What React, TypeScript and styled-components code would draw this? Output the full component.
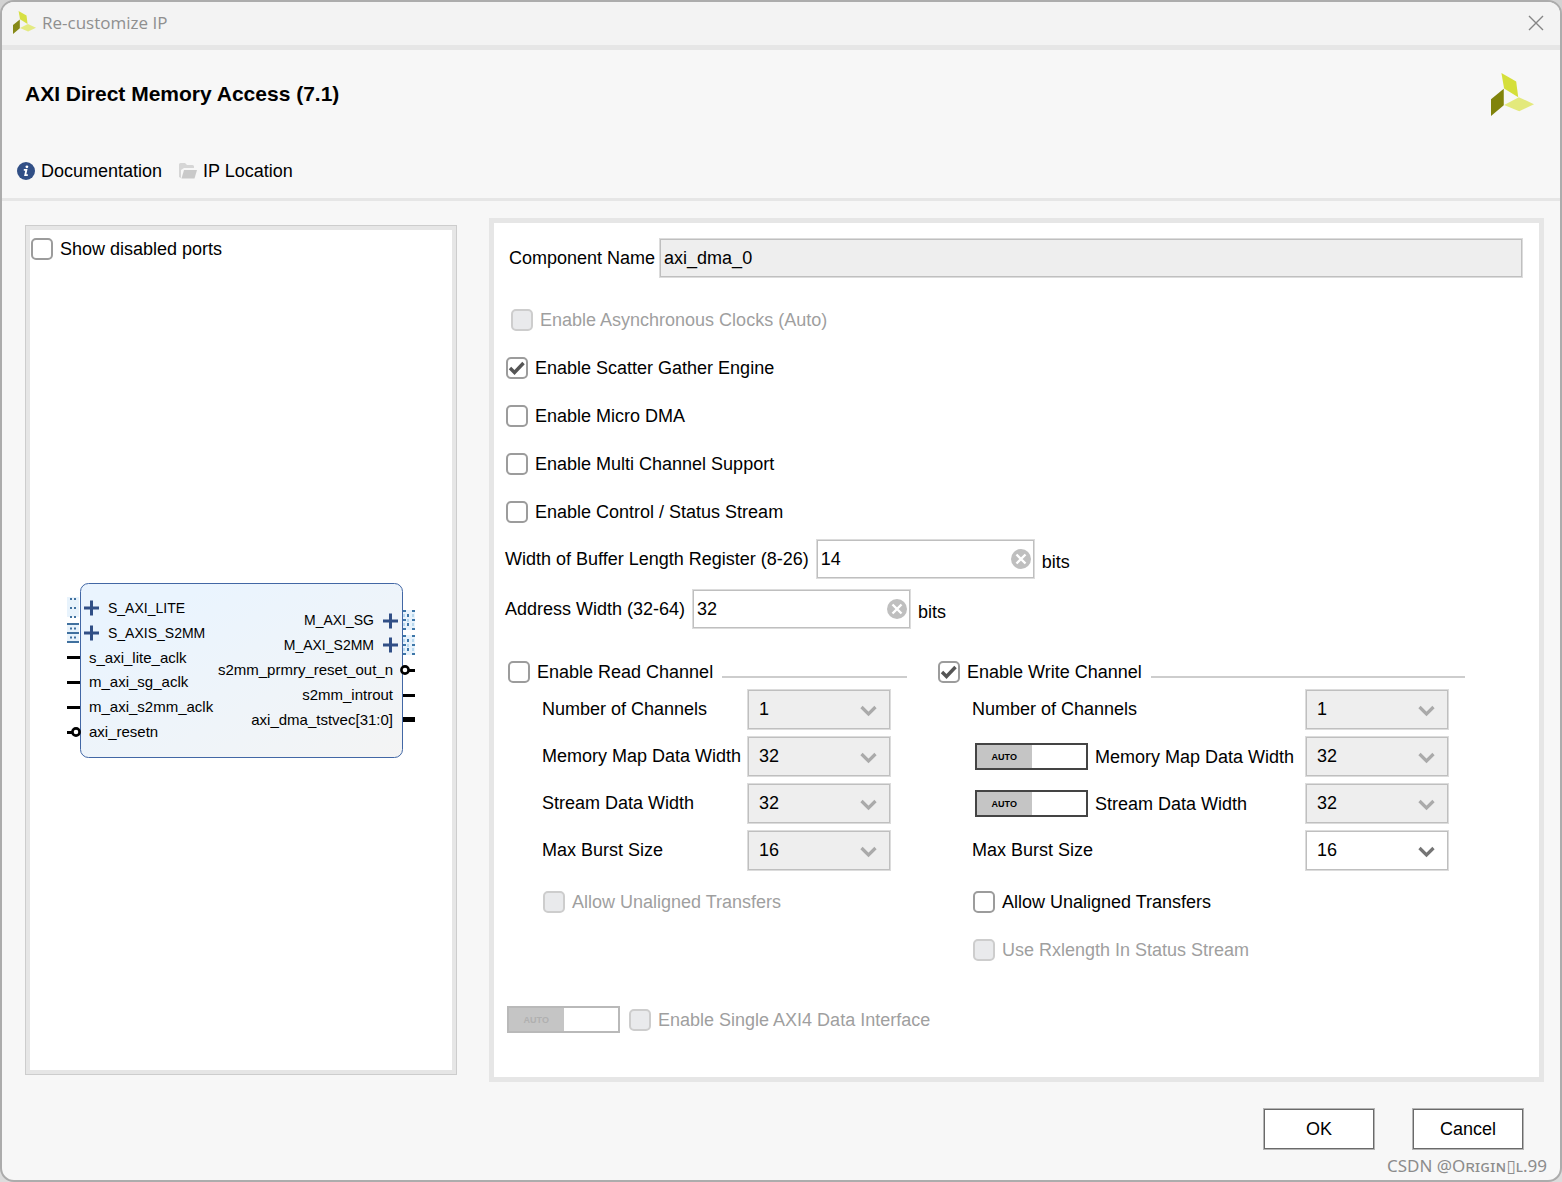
import React, { useId, useState } from "react";
import styled, { createGlobalStyle } from "styled-components";

const GlobalStyle = createGlobalStyle`
  *, *::before, *::after { box-sizing: border-box; }
  body {
    margin: 0;
    background: linear-gradient(
      #d2d2d2 0 33px, #9a9a9a 33px 35px, #a0b0cb 35px 79px,
      #d0d0d0 79px 93px, #b2b2b2 93px 1160px, #dcdcdc 1160px
    );
  }
  body, button, input, select {
    font-family: "Liberation Sans", Arial, sans-serif;
    font-size: 18px;
    line-height: 22px;
    color: #000;
  }
`;

const Dialog = styled.main`
  position: relative;
  display: flex;
  flex-direction: column;
  min-height: 100vh;
  border: 2px solid #acacac;
  border-radius: 14px;
  background: #f7f7f7;
  overflow: hidden;
`;

const TitleBar = styled.header`
  display: flex;
  align-items: center;
  gap: 6px;
  height: 48px;
  padding: 0 16px 2px 11px;
  border-bottom: 5px solid #e6e6e6;
  background: #f3f3f3;
`;

const WindowTitle = styled.span`
  flex: 1;
  font-family: "Open Sans", "Noto Sans", sans-serif;
  font-size: 17px;
  color: #8f8f8f;
`;

const IconButton = styled.button`
  display: flex;
  padding: 0;
  border: 0;
  background: none;
  cursor: pointer;
`;

const Heading = styled.section`
  padding: 23px 26px 15px 15px;
  border-bottom: 3px solid #e6e6e6;
`;

const HeadingRow = styled.div`
  display: flex;
  align-items: center;
  justify-content: space-between;
  padding-left: 8px;
`;

const IpName = styled.h1`
  margin: 0;
  padding-bottom: 2px;
  font-size: 21px;
  line-height: 24px;
`;

const Toolbar = styled.nav`
  display: flex;
  gap: 17px;
  margin-top: 43px;
`;

const ToolLink = styled.a`
  display: flex;
  align-items: center;
  gap: 6px;
  height: 24px;
  color: #000;
  text-decoration: none;
`;

const Content = styled.div`
  display: flex;
  flex: 1;
  gap: 32px;
  padding: 17px 16px 0 23px;
`;

const PreviewPanel = styled.section`
  display: flex;
  flex-direction: column;
  flex: 0 0 432px;
  margin: 7px 0;
  border: 1px solid #cdcdcd;
  background: #fff;
  box-shadow: inset 0 0 0 4px #e6e6e6;
  padding: 12px 5px;
`;

const Canvas = styled.div`
  display: flex;
  flex: 1;
  align-items: center;
  justify-content: center;
  padding-top: 20px;
`;

const FormPanel = styled.form`
  flex: 1;
  min-width: 0;
  border: 5px solid #e6e6e6;
  background: #fff;
  padding: 15px 16px 44px 11px;
`;

const Row = styled.div<{ $indent?: number; $gap?: number }>`
  display: flex;
  align-items: center;
  gap: ${(p) => p.$gap ?? 7}px;
  padding-left: ${(p) => p.$indent ?? 0}px;
`;

const Stack = styled.div<{ $gap: number; $top: number; $indent?: number }>`
  display: flex;
  flex-direction: column;
  gap: ${(p) => p.$gap}px;
  margin-top: ${(p) => p.$top}px;
  padding-left: ${(p) => p.$indent ?? 0}px;
`;

const TextInput = styled.input<{ $wide?: boolean }>`
  width: ${(p) => (p.$wide ? "100%" : "219px")};
  height: 40px;
  padding: 0 ${(p) => (p.$wide ? 4 : 32)}px 0 4px;
  border: 1px solid #dcdcdc;
  border-radius: 0;
  outline: 0;
  background: ${(p) => (p.readOnly ? "#eeeeee" : "#fff")};
  box-shadow: inset 0 0 0 1px #bfbfbf;
`;

const Overlaid = styled.div`
  position: relative;
  display: flex;
`;

const ClearButton = styled(IconButton)`
  position: absolute;
  top: 10px;
  right: 4px;
`;

const Unit = styled.span`
  padding-top: 5px;
`;

const CheckLabel = styled.label<{ $disabled?: boolean }>`
  display: flex;
  align-items: center;
  gap: 7px;
  white-space: nowrap;
  color: ${(p) => (p.$disabled ? "#9f9f9f" : "#000")};
`;

const CheckInput = styled.input`
  flex: none;
  appearance: none;
  width: 22px;
  height: 22px;
  margin: 0;
  border: 2px solid #9c9c9c;
  border-radius: 5px;
  background: #fff;
  &:disabled {
    border-color: #cdcdcd;
    background: #e9eaec;
  }
`;

const Tick = styled.svg`
  position: absolute;
  inset: 0;
  pointer-events: none;
`;

const Groups = styled.div`
  display: grid;
  grid-template-columns: 399px 527px;
  gap: 31px;
  margin: 32px 0 45px;
  padding-left: 3px;
`;

const Group = styled.fieldset`
  min-width: 0;
  margin: 0;
  padding: 0;
  border: 0;
`;

const GroupHead = styled.div`
  display: flex;
  align-items: center;
  gap: 9px;
  margin-bottom: 6px;
`;

const Rule = styled.span`
  flex: 1;
  align-self: flex-end;
  height: 2px;
  margin-bottom: 5px;
  background: #cdcdcd;
`;

const Options = styled.div<{ $end: number }>`
  display: flex;
  flex-direction: column;
  gap: 6px;
  padding: 0 ${(p) => p.$end}px 0 34px;
`;

const OptionRow = styled.div<{ $auto?: boolean }>`
  display: flex;
  align-items: center;
  gap: ${(p) => (p.$auto ? 7 : 6)}px;
  height: 41px;
  padding-left: ${(p) => (p.$auto ? 3 : 0)}px;
  & > label {
    flex: 1;
    padding-bottom: ${(p) => (p.$auto ? 0 : 2)}px;
    white-space: nowrap;
  }
`;

const Select = styled.select`
  appearance: none;
  width: 144px;
  height: 41px;
  padding: 0 32px 2px 11px;
  border: 1px solid #dcdcdc;
  border-radius: 0;
  background: #fff;
  box-shadow: inset 0 0 0 1px #bfbfbf;
  &:disabled {
    background: #eeeeee;
    color: #000;
    opacity: 1;
  }
`;

const Chevron = styled.svg`
  position: absolute;
  top: 16px;
  right: 14px;
  pointer-events: none;
`;

const Switch = styled.button`
  display: grid;
  grid-template-columns: 1fr 1fr;
  flex: none;
  width: 113px;
  height: 27px;
  padding: 0;
  border: 2px solid #444;
  background: #fff;
  &:disabled {
    border-color: #b9b9b9;
    color: #b0b0b0;
  }
`;

const SwitchText = styled.span`
  background: #c5c5c5;
  font-size: 9px;
  font-weight: bold;
  line-height: 24px;
  height: 23px;
  text-align: center;
`;

const Footer = styled.footer`
  display: flex;
  justify-content: flex-end;
  gap: 37px;
  padding: 26px 36px 30px;
`;

const PushButton = styled.button`
  width: 112px;
  height: 42px;
  padding: 0;
  border: 1px solid #b4b4b4;
  background: #fff;
  box-shadow: inset 0 0 0 1px #6a6a6a;
`;

const Watermark = styled.span`
  position: absolute;
  right: 13px;
  bottom: 3px;
  font-family: "Noto Sans", "DejaVu Sans", sans-serif;
  font-size: 17px;
  color: #8c8c8c;
`;

const BlockDrawing = styled.svg`
  display: block;
  font-family: "Liberation Sans", Arial, sans-serif;
  font-size: 15px;
`;

const BusName = styled.text`
  font-size: 14px;
`;

function Logo({ size, faded }: { size: number; faded?: boolean }) {
  return (
    <svg width={size} height={size} viewBox="156 220 128 128" opacity={faded ? 0.95 : 1} aria-hidden="true">
      <path d="M187 220L231 245L237 292L195 266Z" fill="#d5df3a" />
      <path d="M194 267V316L156 348V298Z" fill="#80830b" />
      <path d="M195 315L239 292L284 313L240 334Z" fill="#e3e97c" />
    </svg>
  );
}

type CheckProps = { label: string; checked?: boolean; disabled?: boolean };

function Check({ label, checked = false, disabled }: CheckProps) {
  const [on, setOn] = useState(checked);
  return (
    <CheckLabel $disabled={disabled}>
      <Overlaid>
        <CheckInput type="checkbox" checked={on} disabled={disabled} onChange={() => setOn(!on)} />
        {on && (
          <Tick width="22" height="22" viewBox="0 0 22 22">
            <path d="M4 11L8.5 15.5L17.5 6" fill="none" stroke="#555" strokeWidth="3.4" />
          </Tick>
        )}
      </Overlaid>
      {label}
    </CheckLabel>
  );
}

function AutoSwitch({ label, disabled }: { label: string; disabled?: boolean }) {
  return (
    <Switch type="button" role="switch" aria-checked="true" aria-label={`${label} auto`} disabled={disabled}>
      <SwitchText>AUTO</SwitchText>
    </Switch>
  );
}

function NumberField({ label, value }: { label: string; value: string }) {
  const id = useId();
  const [text, setText] = useState(value);
  return (
    <Row>
      <label htmlFor={id}>{label}</label>
      <Overlaid>
        <TextInput id={id} value={text} onChange={(e) => setText(e.target.value)} />
        <ClearButton type="button" aria-label="Clear" onClick={() => setText("")}>
          <svg width="20" height="20" viewBox="0 0 20 20">
            <circle cx="10" cy="10" r="10" fill="#bfbfbf" />
            <path d="M5.5 5.5L14.5 14.5M14.5 5.5L5.5 14.5" stroke="#fff" strokeWidth="2.4" />
          </svg>
        </ClearButton>
      </Overlaid>
      <Unit>bits</Unit>
    </Row>
  );
}

type OptionProps = { label: string; value: string; auto?: boolean; enabled?: boolean };

function Option({ label, value, auto, enabled }: OptionProps) {
  const id = useId();
  return (
    <OptionRow $auto={auto}>
      {auto && <AutoSwitch label={label} />}
      <label htmlFor={id}>{label}</label>
      <Overlaid>
        <Select id={id} disabled={!enabled} defaultValue={value}>
          <option>{value}</option>
        </Select>
        <Chevron width="17" height="12" viewBox="0 0 17 12">
          <path d="M1.5 2L8.5 9L15.5 2" fill="none" stroke={enabled ? "#757575" : "#aaaaaa"} strokeWidth="3.2" />
        </Chevron>
      </Overlaid>
    </OptionRow>
  );
}

function Plus({ x, y }: { x: number; y: number }) {
  return <path d={`M${x - 7} ${y}h15M${x + 0.5} ${y - 7.5}v15`} stroke="#314f86" strokeWidth="3" fill="none" />;
}

function BusDots({ x, y }: { x: number; y: number }) {
  return (
    <g strokeWidth="2">
      <rect x={x} y={y} width="12" height="20" fill="#e8f3fc" />
      <path
        d={`M${x} ${y + 1}h3M${x + 9} ${y + 1}h3M${x} ${y + 10}h3M${x + 9} ${y + 10}h3M${x} ${y + 19}h3M${x + 9} ${y + 19}h3`}
        stroke="#3d76a8"
      />
      <path d={`M${x + 5} ${y + 4}v3M${x + 5} ${y + 13}v3`} stroke="#3d76a8" />
      <path
        d={`M${x + 1} ${y + 4}v3M${x + 10} ${y + 4}v3M${x + 5} ${y + 9}v3M${x + 1} ${y + 13}v3M${x + 10} ${y + 13}v3`}
        stroke="#b9d9ee"
      />
    </g>
  );
}

const leftPorts = ["s_axi_lite_aclk", "m_axi_sg_aclk", "m_axi_s2mm_aclk", "axi_resetn"];
const leftPortY = [74, 98, 123, 148];
const rightPorts = ["s2mm_prmry_reset_out_n", "s2mm_introut", "axi_dma_tstvec[31:0]"];
const rightPortY = [87, 112, 137];

function IpBlock() {
  return (
    <BlockDrawing width="350" height="176" viewBox="0 0 350 176" role="img" aria-label="AXI DMA block symbol">
      <defs>
        <linearGradient id="blockFill" x1="0" y1="0" x2="1" y2="1">
          <stop offset="0.2" stopColor="#eaf4fe" />
          <stop offset="0.7" stopColor="#f0f4f8" />
          <stop offset="1" stopColor="#f4f4f4" />
        </linearGradient>
      </defs>
      <rect x="14.5" y="0.5" width="322" height="174" rx="8" fill="url(#blockFill)" stroke="#4267a5" />

      <rect x="1" y="14" width="12" height="20" fill="#e8f3fc" />
      <path d="M4 16h2M8 16h2M4 25h2M8 25h2M4 34h2M8 34h2" stroke="#41719f" strokeWidth="2" />
      <rect x="1" y="40" width="12" height="19" fill="#e8f3fc" />
      <path d="M1 41h12M1 50h12M1 59h12" stroke="#41719f" strokeWidth="2" />
      <path d="M4 45.5h2M8 45.5h2M4 54.5h2M8 54.5h2" stroke="#41719f" strokeWidth="2" />
      <Plus x={25} y={25} />
      <Plus x={25} y={50} />
      <BusName x="42" y="30">S_AXI_LITE</BusName>
      <BusName x="42" y="55">S_AXIS_S2MM</BusName>
      {leftPorts.map((name, i) => (
        <text key={name} x="23" y={leftPortY[i] + 6}>{name}</text>
      ))}
      <path d="M1 74.5h13M1 99.5h13M1 124.5h13M1 149.5h5" stroke="#000" strokeWidth="3" />
      <circle cx="10" cy="149" r="3.6" fill="#fff" stroke="#000" strokeWidth="2.6" />

      <BusName x="308" y="42" textAnchor="end">M_AXI_SG</BusName>
      <BusName x="308" y="67" textAnchor="end">M_AXI_S2MM</BusName>
      <Plus x={324} y={38} />
      <Plus x={324} y={62} />
      <BusDots x={337} y={27} />
      <BusDots x={337} y={52} />
      {rightPorts.map((name, i) => (
        <text key={name} x="327" y={rightPortY[i] + 5} textAnchor="end">{name}</text>
      ))}
      <path d="M343 87.5h6M337 112.5h12" stroke="#000" strokeWidth="3" />
      <path d="M337 136.5h12" stroke="#000" strokeWidth="5" />
      <circle cx="339" cy="87" r="3.6" fill="#fff" stroke="#000" strokeWidth="2.6" />
    </BlockDrawing>
  );
}

export default function App() {
  return (
    <>
      <GlobalStyle />
      <Dialog>
        <TitleBar>
          <Logo size={23} faded />
          <WindowTitle>Re-customize IP</WindowTitle>
          <IconButton type="button" aria-label="Close">
            <svg width="16" height="16" viewBox="0 0 16 16">
              <path d="M1 1L15 15M15 1L1 15" stroke="#858585" strokeWidth="1.4" />
            </svg>
          </IconButton>
        </TitleBar>

        <Heading>
          <HeadingRow>
            <IpName>AXI Direct Memory Access (7.1)</IpName>
            <Logo size={43} />
          </HeadingRow>
          <Toolbar>
            <ToolLink href="#documentation">
              <svg width="18" height="18" viewBox="0 0 18 18" aria-hidden="true">
                <circle cx="9" cy="9" r="9" fill="#314f86" />
                <circle cx="9.9" cy="4.8" r="1.4" fill="#fff" />
                <path d="M6.8 7.8H9.4L8.2 13.2H10.8" fill="none" stroke="#fff" strokeWidth="1.8" />
              </svg>
              Documentation
            </ToolLink>
            <ToolLink href="#location">
              <svg width="18" height="16" viewBox="0 0 18 16" aria-hidden="true">
                <path d="M0 14V1.5Q0 0 1.5 0H6L8 2H13.5Q15 2 15 3.500V5H5L2 7V15Z" fill="#d6d6d6" />
                <path d="M2.5 15.5L5 7H18L15.5 15.5Z" fill="#c9c9c9" />
              </svg>
              IP Location
            </ToolLink>
          </Toolbar>
        </Heading>

        <Content>
          <PreviewPanel>
            <Check label="Show disabled ports" />
            <Canvas>
              <IpBlock />
            </Canvas>
          </PreviewPanel>

          <FormPanel onSubmit={(e) => e.preventDefault()}>
            <Row $indent={4} $gap={4}>
              <CheckLabel htmlFor="component-name">Component Name</CheckLabel>
              <TextInput id="component-name" $wide readOnly value="axi_dma_0" />
            </Row>

            <Stack $gap={26} $top={31} $indent={1}>
              <Row $indent={5}>
                <Check label="Enable Asynchronous Clocks (Auto)" disabled />
              </Row>
              <Check label="Enable Scatter Gather Engine" checked />
              <Check label="Enable Micro DMA" />
              <Check label="Enable Multi Channel Support" />
              <Check label="Enable Control / Status Stream" />
            </Stack>

            <Stack $gap={10} $top={16}>
              <NumberField label="Width of Buffer Length Register (8-26)" value="14" />
              <NumberField label="Address Width (32-64)" value="32" />
            </Stack>

            <Groups>
              <Group aria-label="Read channel">
                <GroupHead>
                  <Check label="Enable Read Channel" />
                  <Rule />
                </GroupHead>
                <Options $end={16}>
                  <Option label="Number of Channels" value="1" />
                  <Option label="Memory Map Data Width" value="32" />
                  <Option label="Stream Data Width" value="32" />
                  <Option label="Max Burst Size" value="16" />
                </Options>
                <Stack $gap={26} $top={20} $indent={35}>
                  <Check label="Allow Unaligned Transfers" disabled />
                </Stack>
              </Group>
              <Group aria-label="Write channel">
                <GroupHead>
                  <Check label="Enable Write Channel" checked />
                  <Rule />
                </GroupHead>
                <Options $end={16}>
                  <Option label="Number of Channels" value="1" />
                  <Option label="Memory Map Data Width" value="32" auto />
                  <Option label="Stream Data Width" value="32" auto />
                  <Option label="Max Burst Size" value="16" enabled />
                </Options>
                <Stack $gap={26} $top={20} $indent={35}>
                  <Check label="Allow Unaligned Transfers" />
                  <Check label="Use Rxlength In Status Stream" disabled />
                </Stack>
              </Group>
            </Groups>

            <Row $indent={2} $gap={9}>
              <AutoSwitch label="Enable Single AXI4 Data Interface" disabled />
              <Check label="Enable Single AXI4 Data Interface" disabled />
            </Row>
          </FormPanel>
        </Content>

        <Footer>
          <PushButton type="button">OK</PushButton>
          <PushButton type="button">Cancel</PushButton>
        </Footer>
        <Watermark>CSDN @Oʀɪɢɪɴ▯ʟ.99</Watermark>
      </Dialog>
    </>
  );
}
